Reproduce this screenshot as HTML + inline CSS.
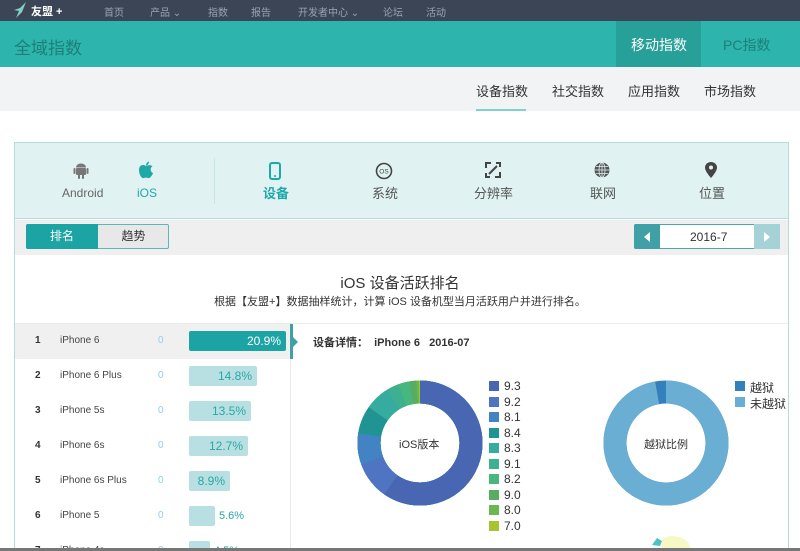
<!DOCTYPE html>
<html><head><meta charset="utf-8">
<style>
*{margin:0;padding:0;box-sizing:border-box}
html,body{width:800px;height:551px;overflow:hidden}
body{background:#fff;font-family:"Liberation Sans","Noto Sans CJK SC",sans-serif;position:relative;color:#333}
.a{position:absolute;white-space:nowrap}
.nav{left:0;top:0;width:800px;height:21px;background:#3b4556}
.nav span{position:absolute;top:4px;font-size:10px;color:#9aa3b0}
.hd{left:0;top:21px;width:800px;height:46px;background:#2db5ad}
.sub{left:0;top:67px;width:800px;height:44px;background:#f2f3f5}
.sub span{position:absolute;top:14px;font-size:13px;color:#333}
.box{left:14px;top:142px;width:775px;height:420px;border:1px solid #b5dedb;background:#fff}
.top{left:15px;top:143px;width:773px;height:76px;background:#e0f2f2;border-bottom:1px solid #b5dedb}
.tl{font-size:12px;color:#666;top:186px}
.bar{left:15px;top:220px;width:773px;height:35px;background:#efefef}
.row{left:15px;width:275px;height:35px;font-size:10px}
.row .n{position:absolute;left:20px;top:11px;font-weight:bold;color:#333}
.row .m{position:absolute;left:45px;top:11px;color:#444}
.row .z{position:absolute;left:143px;top:11px;color:#8fd0ea}
.row .b{position:absolute;left:174px;top:7px;height:20px;line-height:20px;background:#b8e0e2;border-radius:2px;color:#2aa7a5;font-size:12px;text-align:right;padding-right:5px}
.lg{font-size:12px;color:#333;left:504px}
.sq{position:absolute;width:10px;height:10px;left:489px}
</style></head><body>
<div class="a nav">
<svg class="a" style="left:12px;top:2px" width="18" height="17" viewBox="0 0 18 17"><path d="M14 0 L8 6 L2 8 L7 9 L4 16 L10 10 Z" fill="#7ed1c4"/></svg>
<span style="left:31px;top:3px;color:#fff;font-weight:bold;font-size:11px">友盟 +</span>
<span style="left:104px">首页</span><span style="left:150px">产品 ⌄</span><span style="left:208px">指数</span><span style="left:251px">报告</span><span style="left:298px">开发者中心 ⌄</span><span style="left:383px">论坛</span><span style="left:426px">活动</span>
</div>
<div class="a hd">
<span class="a" style="left:14px;top:13px;font-size:17px;color:#1d7f79">全域指数</span>
<div class="a" style="left:616px;top:0;width:85px;height:46px;background:#26a098"></div>
<span class="a" style="left:631px;top:14px;font-size:14px;color:#fff">移动指数</span>
<span class="a" style="left:723px;top:14px;font-size:14px;color:#1d7f79">PC指数</span>
</div>
<div class="a sub">
<span style="left:476px">设备指数</span><span style="left:552px">社交指数</span><span style="left:628px">应用指数</span><span style="left:704px">市场指数</span>
<div class="a" style="left:476px;top:42px;width:50px;height:2px;background:#7fd3cd"></div>
</div>
<div class="a box"></div>
<div class="a top"></div>
<svg class="a" style="left:73px;top:163px" width="16" height="16" viewBox="0 0 16 16" fill="#777"><rect x="3" y="5" width="10" height="7" rx="1"/><path d="M3 4.5 A5 4 0 0 1 13 4.5Z"/><rect x="0.5" y="5" width="2" height="6" rx="1"/><rect x="13.5" y="5" width="2" height="6" rx="1"/><rect x="5" y="11" width="2" height="5" rx="1"/><rect x="9" y="11" width="2" height="5" rx="1"/></svg>
<svg class="a" style="left:138px;top:161px" width="16" height="18" viewBox="0 0 16 18" fill="#1fa8a8"><path d="M8 5 C5 3 1 4 1 9 C1 14 4 18 6 17 C7 16.5 9 16.5 10 17 C12 18 15 13 15 12 C12 11 12 6 14.5 5.5 C13 3.5 10 4 8 5Z"/><path d="M8 4.5 C8 2 10 0.5 11 0.5 C11 3 9.5 4.3 8 4.5Z"/></svg>
<div class="a" style="left:214px;top:158px;width:1px;height:46px;background:#c8e6e4"></div>
<svg class="a" style="left:268px;top:162px" width="14" height="18" viewBox="0 0 14 18"><rect x="2" y="1" width="10" height="16" rx="2" fill="none" stroke="#1fa8a8" stroke-width="2"/><circle cx="7" cy="14" r="1" fill="#1fa8a8"/></svg>
<svg class="a" style="left:375px;top:162px" width="18" height="18" viewBox="0 0 18 18"><circle cx="9" cy="9" r="7.5" fill="none" stroke="#444" stroke-width="1.6"/><text x="9" y="11.5" font-size="6.5" text-anchor="middle" fill="#444" font-family="Liberation Sans">OS</text></svg>
<svg class="a" style="left:485px;top:162px" width="16" height="16" viewBox="0 0 16 16" fill="none" stroke="#444" stroke-width="2"><path d="M1 6V1h5M10 15h5v-5M15 5V1h-4M1 11v4h4M4 12L12 4"/></svg>
<svg class="a" style="left:594px;top:162px" width="16" height="16" viewBox="0 0 16 16"><circle cx="8" cy="8" r="7.5" fill="#555"/><g stroke="#e0f2f2" stroke-width="0.8" fill="none"><ellipse cx="8" cy="8" rx="3" ry="7.5"/><path d="M8 0.5V15.5M0.5 8H15.5M2 4.5H14M2 11.5H14"/></g></svg>
<svg class="a" style="left:704px;top:161px" width="14" height="18" viewBox="0 0 14 18"><path d="M7 1 C3.5 1 1 3.5 1 6.5 C1 10.5 7 17 7 17 C7 17 13 10.5 13 6.5 C13 3.5 10.5 1 7 1Z" fill="#444"/><circle cx="7" cy="6.5" r="2" fill="#e0f2f2"/></svg>
<span class="a tl" style="left:62px">Android</span>
<span class="a tl" style="left:137px;color:#1fa8a8">iOS</span>
<span class="a" style="left:263px;top:183px;font-size:13px;color:#1fa8a8;font-weight:bold">设备</span>
<span class="a" style="left:372px;top:183px;font-size:13px;color:#555">系统</span>
<span class="a" style="left:474px;top:183px;font-size:13px;color:#555">分辨率</span>
<span class="a" style="left:590px;top:183px;font-size:13px;color:#555">联网</span>
<span class="a" style="left:699px;top:183px;font-size:13px;color:#555">位置</span>
<div class="a bar"></div>
<div class="a" style="left:26px;top:224px;width:143px;height:25px;border:1px solid #5ab9b8;border-radius:2px;background:#e8e8e8"></div>
<div class="a" style="left:26px;top:224px;width:72px;height:25px;background:#1ca3a4;border-radius:2px 0 0 2px;color:#fff;font-size:12px;text-align:center;line-height:25px">排名</div>
<div class="a" style="left:98px;top:224px;width:71px;height:25px;font-size:12px;text-align:center;line-height:25px;color:#333">趋势</div>
<div class="a" style="left:634px;top:224px;width:146px;height:25px;border:1px solid #4aa8aa;border-radius:2px;background:#fff"></div>
<div class="a" style="left:634px;top:224px;width:26px;height:25px;background:#3fa1a5;border-radius:2px 0 0 2px"></div>
<div class="a" style="left:754px;top:224px;width:26px;height:25px;background:#a4d2d6"></div>
<svg class="a" style="left:643px;top:232px" width="8" height="10"><path d="M7 0V10L1 5Z" fill="#fff"/></svg>
<svg class="a" style="left:763px;top:232px" width="8" height="10"><path d="M1 0V10L7 5Z" fill="#fff"/></svg>
<span class="a" style="left:690px;top:230px;font-size:12px;color:#333">2016-7</span>
<div class="a" style="left:0;top:272px;width:800px;text-align:center;font-size:15px;color:#333">iOS 设备活跃排名</div>
<div class="a" style="left:0;top:293px;width:800px;text-align:center;font-size:11px;color:#333">根据【友盟+】数据抽样统计，计算 iOS 设备机型当月活跃用户并进行排名。</div>
<div class="a" style="left:15px;top:323px;width:773px;height:1px;background:#e6ecec"></div>
<div class="a row" style="top:324px;background:#f0f0f0"><span class="n">1</span><span class="m">iPhone 6</span><span class="z">0</span><span class="b" style="width:97px;background:#1ca3a4;color:#fff">20.9%</span></div>
<div class="a row" style="top:359px"><span class="n">2</span><span class="m">iPhone 6 Plus</span><span class="z">0</span><span class="b" style="width:68px">14.8%</span></div>
<div class="a row" style="top:394px"><span class="n">3</span><span class="m">iPhone 5s</span><span class="z">0</span><span class="b" style="width:62px">13.5%</span></div>
<div class="a row" style="top:429px"><span class="n">4</span><span class="m">iPhone 6s</span><span class="z">0</span><span class="b" style="width:59px">12.7%</span></div>
<div class="a row" style="top:464px"><span class="n">5</span><span class="m">iPhone 6s Plus</span><span class="z">0</span><span class="b" style="width:41px">8.9%</span></div>
<div class="a row" style="top:499px"><span class="n">6</span><span class="m">iPhone 5</span><span class="z">0</span><span class="b" style="width:26px"></span><span class="a" style="left:204px;top:11px;font-size:11px;color:#2aa7a5">5.6%</span></div>
<div class="a row" style="top:534px"><span class="n">7</span><span class="m">iPhone 4s</span><span class="z">0</span><span class="b" style="width:21px"></span><span class="a" style="left:199px;top:11px;font-size:11px;color:#2aa7a5">4.5%</span></div>
<div class="a" style="left:290px;top:324px;width:1px;height:230px;background:#e6ecec"></div>
<div class="a" style="left:290px;top:324px;width:3px;height:35px;background:#3fa1a5"></div>
<svg class="a" style="left:292px;top:336px" width="6" height="12"><path d="M0 0L6 6L0 12Z" fill="#3fa1a5"/></svg>
<span class="a" style="left:313px;top:334px;font-size:11px;color:#333;font-weight:bold">设备详情：&nbsp; iPhone 6 &nbsp;&nbsp;2016-07</span>
<svg class="a" style="left:0;top:0" width="800" height="551">
<g transform="rotate(-90 420 443)" fill="none" stroke-width="23">
<circle cx="420" cy="443" r="51" stroke="#a8c530"/>
<circle cx="420" cy="443" r="51" stroke="#6ab94f" stroke-dasharray="319 400"/>
<circle cx="420" cy="443" r="51" stroke="#58ad60" stroke-dasharray="317 400"/>
<circle cx="420" cy="443" r="51" stroke="#47b67f" stroke-dasharray="311 400"/>
<circle cx="420" cy="443" r="51" stroke="#3db08f" stroke-dasharray="302 400"/>
<circle cx="420" cy="443" r="51" stroke="#36ab9f" stroke-dasharray="292 400"/>
<circle cx="420" cy="443" r="51" stroke="#1f9493" stroke-dasharray="271 400"/>
<circle cx="420" cy="443" r="51" stroke="#4283c4" stroke-dasharray="248 400"/>
<circle cx="420" cy="443" r="51" stroke="#4f74c2" stroke-dasharray="222 400"/>
<circle cx="420" cy="443" r="51" stroke="#4866b2" stroke-dasharray="191 400"/>
</g>
<g transform="rotate(-90 666 443)" fill="none" stroke-width="23">
<circle cx="666" cy="443" r="51" stroke="#3380bd"/>
<circle cx="666" cy="443" r="51" stroke="#6aaed3" stroke-dasharray="311 400"/>
</g>
<path d="M652 545 L657 538 L662 541 L660 546 Z" fill="#4cc3c3"/>
<path d="M662 540 C668 534 680 535 688 542 L692 551 L662 551 Z" fill="#f6f9c4"/>
<rect x="0" y="548" width="800" height="3" fill="#777"/>
</svg>
<span class="a" style="left:399px;top:436px;font-size:11px;color:#333">iOS版本</span>
<span class="a" style="left:644px;top:436px;font-size:11px;color:#333">越狱比例</span>
<div class="sq" style="top:381px;background:#4866b2"></div><span class="a lg" style="top:379px">9.3</span>
<div class="sq" style="top:397px;background:#4f74c2"></div><span class="a lg" style="top:395px">9.2</span>
<div class="sq" style="top:412px;background:#4283c4"></div><span class="a lg" style="top:410px">8.1</span>
<div class="sq" style="top:428px;background:#1f9493"></div><span class="a lg" style="top:426px">8.4</span>
<div class="sq" style="top:443px;background:#36ab9f"></div><span class="a lg" style="top:441px">8.3</span>
<div class="sq" style="top:459px;background:#3db08f"></div><span class="a lg" style="top:457px">9.1</span>
<div class="sq" style="top:474px;background:#47b67f"></div><span class="a lg" style="top:472px">8.2</span>
<div class="sq" style="top:490px;background:#58ad60"></div><span class="a lg" style="top:488px">9.0</span>
<div class="sq" style="top:505px;background:#6ab94f"></div><span class="a lg" style="top:503px">8.0</span>
<div class="sq" style="top:521px;background:#a8c530"></div><span class="a lg" style="top:519px">7.0</span>
<div class="sq" style="left:735px;top:381px;background:#3380bd"></div><span class="a lg" style="left:750px;top:379px">越狱</span>
<div class="sq" style="left:735px;top:397px;background:#6aaed3"></div><span class="a lg" style="left:750px;top:395px">未越狱</span>
</body></html>
